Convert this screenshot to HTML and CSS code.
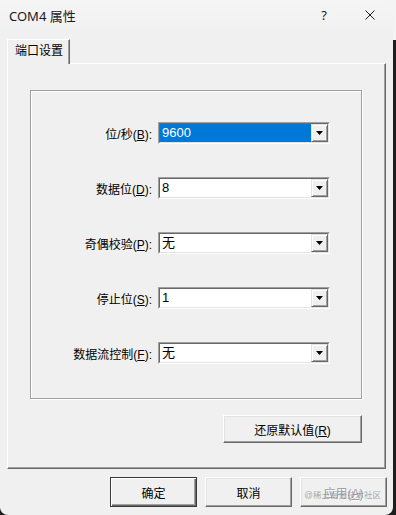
FILE: index.html
```html
<!DOCTYPE html>
<html lang="zh-CN">

<head>
    <meta charset="UTF-8">
    <title>COM4 属性</title>
    <link rel="stylesheet" href="styles.css">
</head>

<body>

    <div class="window">

        <!-- Title bar -->
        <div class="titlebar">
            <span class="title">COM4 属性</span>
            <span class="help">?</span>
            <span class="close">
                <svg width="10" height="10" viewBox="0 0 10 10">
                    <path d="M0.5 0.5 L9.5 9.5 M9.5 0.5 L0.5 9.5" stroke="#1a1a1a" stroke-width="1" fill="none" />
                </svg>
            </span>
        </div>

        <!-- Tabs -->
        <div class="tabs">
            <div class="tab">端口设置</div>
        </div>

        <!-- Tab page -->
        <div class="page">
            <div class="group">
                <span class="field-label">位/秒(<u>B</u>):</span>
                <div class="combo">
                    <div class="combo-inner">
                        <span class="combo-value selected">9600</span>
                        <span class="combo-btn"><svg width="7" height="4" viewBox="0 0 7 4"><polygon points="0,0 7,0 3.5,4" fill="#000" /></svg></span>
                    </div>
                </div>

                <span class="field-label">数据位(<u>D</u>):</span>
                <div class="combo">
                    <div class="combo-inner">
                        <span class="combo-value">8</span>
                        <span class="combo-btn"><svg width="7" height="4" viewBox="0 0 7 4"><polygon points="0,0 7,0 3.5,4" fill="#000" /></svg></span>
                    </div>
                </div>

                <span class="field-label">奇偶校验(<u>P</u>):</span>
                <div class="combo">
                    <div class="combo-inner">
                        <span class="combo-value">无</span>
                        <span class="combo-btn"><svg width="7" height="4" viewBox="0 0 7 4"><polygon points="0,0 7,0 3.5,4" fill="#000" /></svg></span>
                    </div>
                </div>

                <span class="field-label">停止位(<u>S</u>):</span>
                <div class="combo">
                    <div class="combo-inner">
                        <span class="combo-value">1</span>
                        <span class="combo-btn"><svg width="7" height="4" viewBox="0 0 7 4"><polygon points="0,0 7,0 3.5,4" fill="#000" /></svg></span>
                    </div>
                </div>

                <span class="field-label">数据流控制(<u>F</u>):</span>
                <div class="combo">
                    <div class="combo-inner">
                        <span class="combo-value">无</span>
                        <span class="combo-btn"><svg width="7" height="4" viewBox="0 0 7 4"><polygon points="0,0 7,0 3.5,4" fill="#000" /></svg></span>
                    </div>
                </div>
            </div>

            <div class="page-actions">
                <button class="btn btn-wide">还原默认值(<u>R</u>)</button>
            </div>
        </div>

        <!-- Dialog buttons -->
        <div class="footer">
            <button class="btn btn-default">确定</button>
            <button class="btn">取消</button>
            <button class="btn btn-disabled">应用(<u>A</u>)</button>
            <span class="watermark">@稀土掘金技术社区</span>
        </div>

    </div>

</body>

</html>
```

FILE: styles.css
```css
/* Reset */
* {
    margin: 0;
    padding: 0;
    box-sizing: border-box;
}

body {
    width: 396px;
    height: 515px;
    overflow: hidden;
    background: linear-gradient(#f4f4f4 0 40px, #1e1e1e 40px);
    font-family: "Liberation Sans", "Noto Sans CJK SC", sans-serif;
    font-size: 12px;
    color: #000;
}

/* Dialog window */
.window {
    width: 393px;
    height: 515px;
    background-color: #f0f0f0;
    border-radius: 0 8px 8px 8px;
    display: flex;
    flex-direction: column;
}

/* Title bar */
.titlebar {
    height: 30px;
    display: flex;
    align-items: center;
    padding-left: 9px;
    background: linear-gradient(#f5f5f5, #f1f1f1);
    border-radius: 0 8px 0 0;
    font-family: "Noto Sans", "Noto Sans CJK SC", sans-serif;
    font-size: 13px;
    color: #1a1a1a;
}

.title {
    flex: 1;
}

.help,
.close {
    width: 46px;
    height: 30px;
    display: flex;
    justify-content: center;
    align-items: center;
}

/* Tabs */
.tabs {
    display: flex;
    padding: 9px 0 0 7px;
}

.tab {
    position: relative;
    z-index: 1;
    height: 25px;
    margin-bottom: -1px;
    padding: 0 6px 0 7px;
    line-height: 23px;
    background-color: #f0f0f0;
    border: 1px solid;
    border-color: #fff #696969 transparent #fff;
    border-bottom: 0;
    box-shadow: inset -1px 0 #a0a0a0;
}

/* Tab page */
.page {
    width: 379px;
    height: 406px;
    margin-left: 7px;
    padding: 26px 0 0 22px;
    border: 1px solid;
    border-color: #fff #696969 #696969 #fff;
    box-shadow: inset -1px -1px #a0a0a0;
}

/* Group box with the settings */
.group {
    width: 332px;
    display: grid;
    grid-template-columns: 121px 172px;
    column-gap: 6px;
    row-gap: 33px;
    align-items: center;
    padding: 31px 0 34px;
    border: 1px solid #a0a0a0;
    box-shadow: 1px 1px 0 #fff, inset 1px 1px 0 #fff;
}

.field-label {
    text-align: right;
    white-space: nowrap;
}

/* Combo box */
.combo {
    height: 22px;
    border: 1px solid;
    border-color: #a0a0a0 #fff #fff #a0a0a0;
}

.combo-inner {
    height: 100%;
    display: flex;
    background-color: #fff;
    border: 1px solid;
    border-color: #696969 #e3e3e3 #e3e3e3 #696969;
}

.combo-value {
    flex: 1;
    padding-left: 2px;
    line-height: 18px;
    font-size: 13px;
}

.combo-value.selected {
    background-color: #0078d7;
    color: #fff;
}

.combo-btn {
    width: 17px;
    display: flex;
    justify-content: center;
    align-items: center;
    background-color: #f0f0f0;
    border: 1px solid;
    border-color: #e3e3e3 #696969 #696969 #e3e3e3;
    box-shadow: inset 1px 1px #fff, inset -1px -1px #a0a0a0;
}

/* Restore defaults row */
.page-actions {
    width: 332px;
    display: flex;
    justify-content: flex-end;
    margin-top: 16px;
}

/* Push buttons */
.btn {
    width: 87px;
    height: 30px;
    font: inherit;
    color: #000;
    background-color: #f0f0f0;
    border: 1px solid;
    border-color: #fff #696969 #696969 #fff;
    box-shadow: inset -1px -1px #a0a0a0, inset 1px 1px #e3e3e3;
}

.btn u {
    text-decoration: underline;
}

.btn-wide {
    width: 139px;
    height: 28px;
}

.btn-default {
    border-color: #3a3a3a;
    box-shadow: inset 1px 1px #fff, inset -1px -1px #696969, inset -2px -2px #a0a0a0;
}

.btn-disabled {
    color: #a0a0a0;
    text-shadow: 1px 1px #fff;
}

/* Dialog footer */
.footer {
    position: relative;
    display: flex;
    justify-content: flex-end;
    gap: 8px;
    margin-top: 8px;
    padding-right: 6px;
}

.watermark {
    position: absolute;
    top: 11px;
    right: 12px;
    font-size: 8.5px;
    color: rgba(140, 140, 140, 0.75);
    white-space: nowrap;
}
```
